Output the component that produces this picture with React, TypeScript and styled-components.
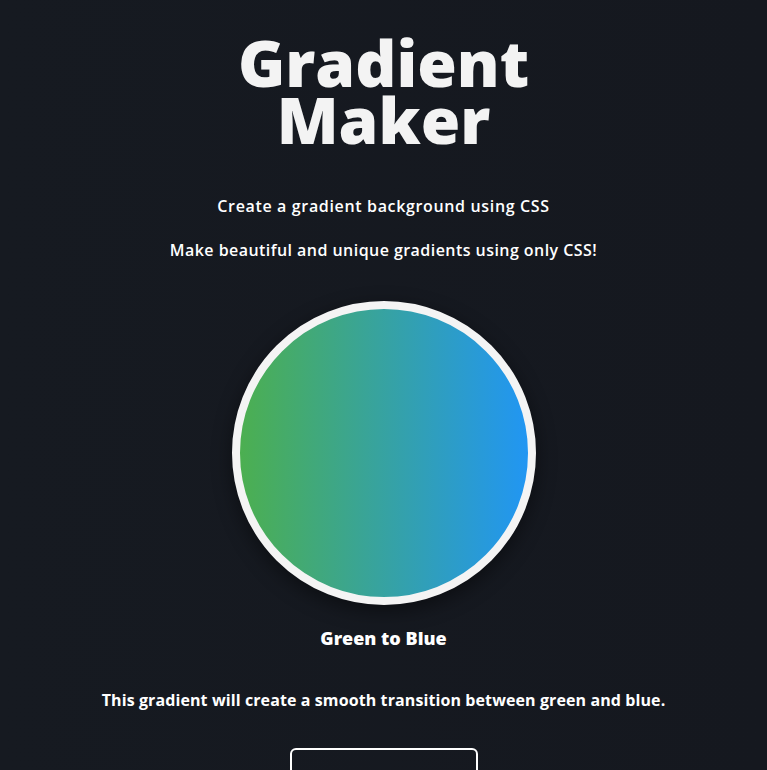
import React from "react";
import styled, { createGlobalStyle } from "styled-components";

const GlobalStyle = createGlobalStyle`
  html, body {
    margin: 0;
    padding: 0;
    background: #161a21;
  }
  body {
    font-family: "Open Sans", "Noto Sans", sans-serif;
    color: #f5f5f5;
  }
`;

const Page = styled.main`
  min-height: 100vh;
  background: linear-gradient(90deg, #161a21 0%, #15181f 100%);
  display: flex;
  flex-direction: column;
  align-items: center;
  text-align: center;
  padding: 34px 20px 40px;
  box-sizing: border-box;
`;

const Title = styled.h1`
  margin: 0;
  font-size: 64px;
  line-height: 57px;
  font-weight: 800;
  color: #f3f3f3;
  width: 320px;
`;

const Subtitle = styled.p<{ $top: number; $spacing: number }>`
  margin: ${(p) => p.$top}px 0 0;
  font-size: 16px;
  font-weight: 600;
  letter-spacing: ${(p) => p.$spacing}px;
  color: #ffffff;
  line-height: 24px;
`;

const Swatch = styled.div`
  margin-top: 39px;
  width: 288px;
  height: 288px;
  border-radius: 50%;
  border: 8px solid #f4f4f4;
  background: linear-gradient(90deg, #4caf50, #2196f3);
  box-shadow: 0 6px 20px rgba(0, 0, 0, 0.45);
`;

const Name = styled.h2`
  margin: 21px 0 0;
  font-size: 18px;
  font-weight: 800;
  color: #ffffff;
  line-height: 24px;
`;

const Description = styled.p`
  margin: 38px 0 0;
  font-size: 16px;
  font-weight: 700;
  letter-spacing: 0.1px;
  color: #ffffff;
  line-height: 24px;
`;

const CopyButton = styled.button`
  margin-top: 36px;
  width: 188px;
  padding: 26px 20px;
  background: transparent;
  border: 2px solid #ffffff;
  border-radius: 6px;
  color: #ffffff;
  font-family: inherit;
  font-size: 16px;
  font-weight: 600;
`;

export default function App() {
  return (
    <>
      <GlobalStyle />
      <Page>
        <Title>Gradient Maker</Title>
        <Subtitle $top={46} $spacing={0.65}>
          Create a gradient background using CSS
        </Subtitle>
        <Subtitle $top={20} $spacing={0.45}>
          Make beautiful and unique gradients using only CSS!
        </Subtitle>
        <Swatch />
        <Name>Green to Blue</Name>
        <Description>
          This gradient will create a smooth transition between green and blue.
        </Description>
        <CopyButton>Copy CSS</CopyButton>
      </Page>
    </>
  );
}
